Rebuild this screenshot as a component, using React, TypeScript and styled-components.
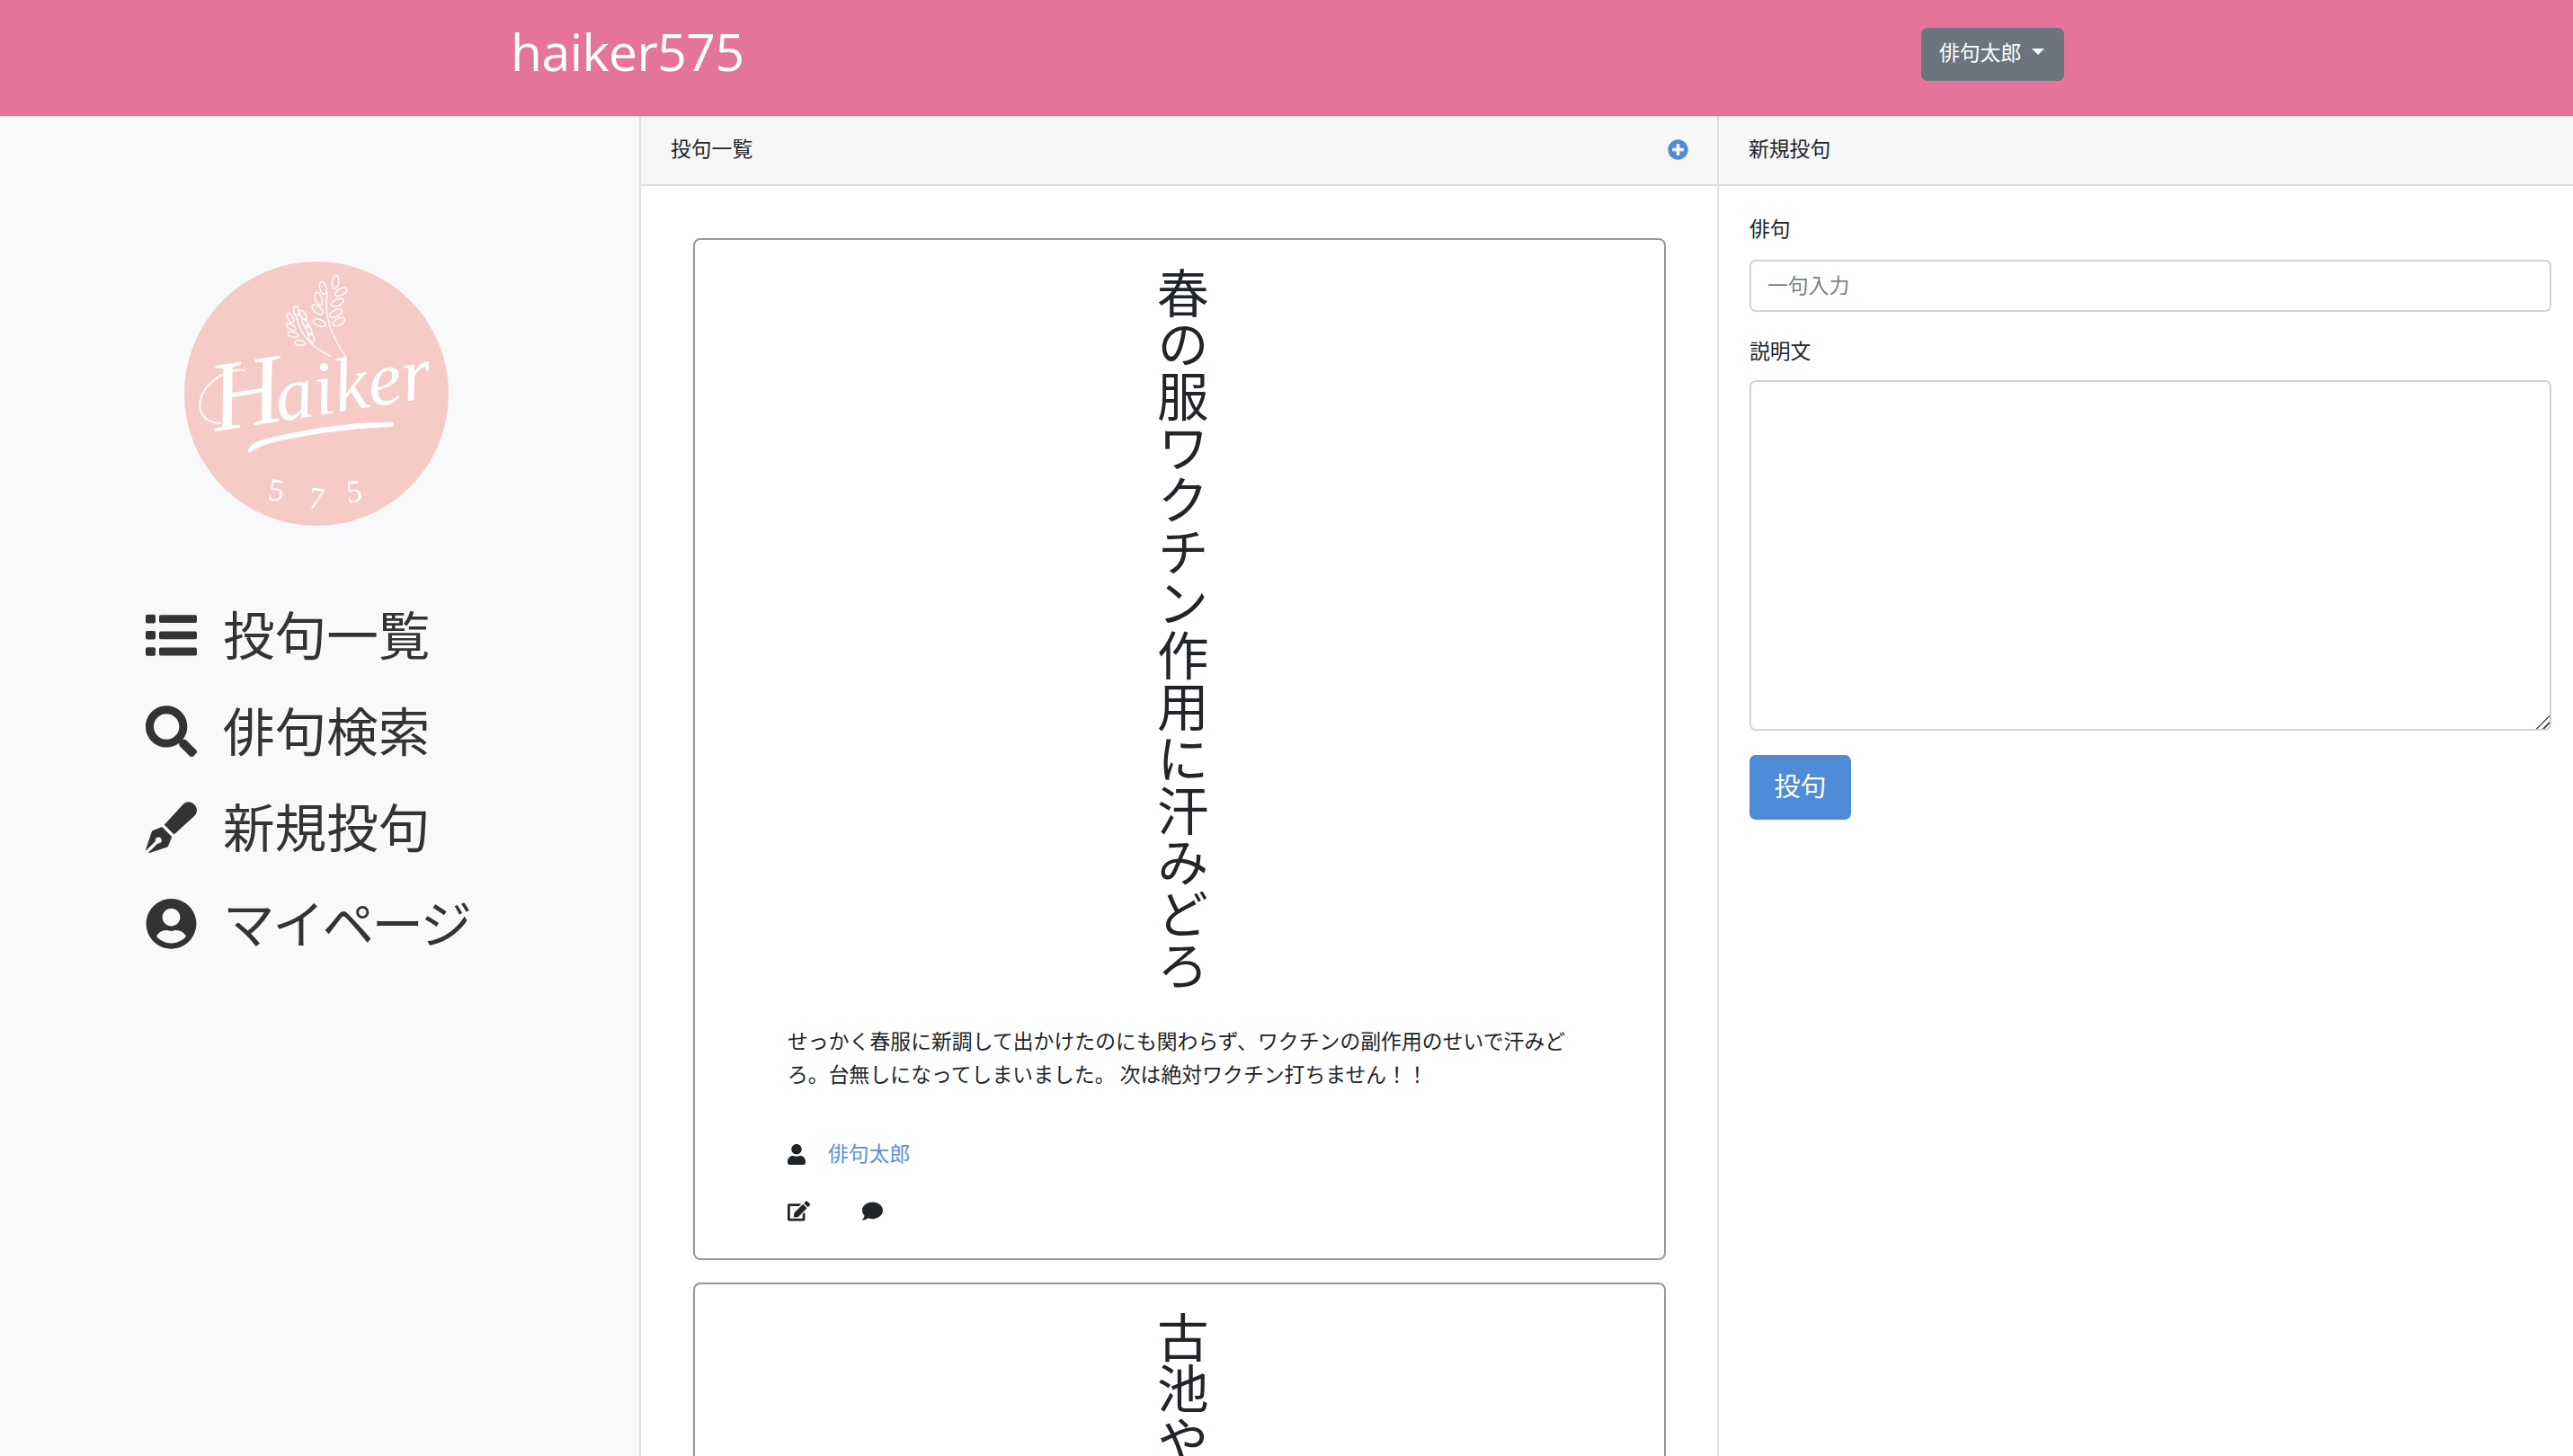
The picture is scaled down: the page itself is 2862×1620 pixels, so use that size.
import styled, { createGlobalStyle } from 'styled-components';
import {
	FaComment,
	FaEdit,
	FaPenFancy,
	FaPlusCircle,
	FaSearch,
	FaUser,
	FaUserCircle,
} from 'react-icons/fa';

const JP = `"Noto Sans CJK JP", "Noto Sans", sans-serif`;

const GlobalStyle = createGlobalStyle`
	* {
		box-sizing: border-box;
	}

	html,
	body {
		margin: 0;
		height: 1620px;
		overflow: hidden;
		background: #fff;
		color: #212529;
		font-family: ${JP};
		font-size: 22.8px;
		line-height: 37px;
	}
`;

function ListIcon() {
	return (
		<svg viewBox="0 -5.8 57 57.6" fill="currentColor">
			{[0, 18.2, 36.4].map((y) => (
				<g key={y}>
					<rect x="0" y={y} width="11" height="9.6" rx="2" />
					<rect x="15" y={y + 0.4} width="42" height="8.8" rx="2" />
				</g>
			))}
		</svg>
	);
}

const NAV_ITEMS = [
	{ icon: <ListIcon />, label: '投句一覧' },
	{ icon: <FaSearch />, label: '俳句検索' },
	{ icon: <FaPenFancy />, label: '新規投句' },
	{ icon: <FaUserCircle />, label: 'マイページ', tight: true },
];

function Logo() {
	const rightLeaves = [
		[578, 130, -80],
		[537, 150, 75],
		[597, 163, -30],
		[522, 186, 70],
		[585, 198, -25],
		[518, 222, 40],
		[580, 234, -25],
		[525, 266, 20],
		[590, 262, -30],
	];
	const leftLeaves = [
		[448, 226, 80],
		[428, 250, 60],
		[470, 240, 60],
		[430, 280, 30],
		[478, 268, 60],
		[437, 305, 15],
		[490, 290, 65],
		[460, 333, 5],
		[498, 315, 70],
	];

	return (
		<svg viewBox="75 62 880 880" width="294" height="294" aria-label="Haiker 575">
			<circle cx="515" cy="502" r="440" fill="#f6cac5" />
			<g fill="none" stroke="#fff" strokeWidth="4.5">
				<path d="M616 385C575 325 535 250 552 165" />
				<path d="M563 378C510 350 465 320 447 245" />
				{rightLeaves.map(([x, y, r]) => (
					<ellipse key={`${x}-${y}`} cx={x} cy={y} rx="22" ry="11" transform={`rotate(${r} ${x} ${y})`} />
				))}
				{leftLeaves.map(([x, y, r]) => (
					<ellipse key={`${x}-${y}`} cx={x} cy={y} rx="17" ry="8" transform={`rotate(${r} ${x} ${y})`} />
				))}
			</g>
			<path
				d="M195 600C120 600 100 520 170 460C205 430 250 418 275 425"
				fill="none"
				stroke="#fff"
				strokeWidth="6"
				strokeLinecap="round"
			/>
			<text
				x="178"
				y="628"
				fill="#fff"
				fontFamily='"Liberation Serif", serif'
				fontStyle="italic"
				transform="rotate(-9 178 628)"
			>
				<tspan fontSize="330">H</tspan>
				<tspan fontSize="255" dx="-24">aiker</tspan>
			</text>
			<path d="M288 692C295 660 340 655 400 640C520 612 660 595 770 597C775 605 770 612 760 613C620 618 480 640 390 660C345 670 310 685 296 698C290 700 287 698 288 692Z" fill="#fff" />
			<g fill="#fff" fontFamily='"Liberation Serif", serif' fontSize="104">
				<text x="355" y="858" transform="rotate(8 385 830)">5</text>
				<text x="490" y="885" transform="rotate(8 515 850)">7</text>
				<text x="615" y="862" transform="rotate(-6 640 830)">5</text>
			</g>
		</svg>
	);
}

const Page = styled.div`
	width: 2862px;
	height: 1620px;
	overflow: hidden;
`;

const Header = styled.header`
	display: flex;
	align-items: flex-start;
	justify-content: space-between;
	height: 129px;
	padding: 29px 566px 0 568px;
	background: #e5749b;
	box-shadow: 0 1px 2px rgba(0, 0, 0, 0.15);
	position: relative;
`;

const Brand = styled.div`
	font-family: "Open Sans", sans-serif;
	font-size: 57px;
	line-height: 57px;
	color: #fff;
	letter-spacing: -0.5px;
`;

const UserButton = styled.button`
	display: flex;
	align-items: center;
	gap: 12px;
	width: 159px;
	height: 59px;
	margin-top: 2px;
	padding: 0 0 7px 20px;
	border: 0;
	border-radius: 7px;
	background: #6c757d;
	color: #fff;
	font-family: ${JP};
	font-size: 22.8px;

	&::after {
		content: '';
		border-top: 7px solid #fff;
		border-left: 7px solid transparent;
		border-right: 7px solid transparent;
	}
`;

const Body = styled.div`
	display: grid;
	grid-template-columns: 711px 1199px 952px;
	height: 1491px;
`;

const Sidebar = styled.aside`
	background: #f8f9fa;
	padding: 162px 0 0 162px;
`;

const LogoWrap = styled.div`
	display: flex;
	height: 294px;
	margin: 0 0 66px 43px;
`;

const NavList = styled.nav`
	display: flex;
	flex-direction: column;
`;

const NavItem = styled.a<{ $tight?: boolean }>`
	display: flex;
	align-items: center;
	gap: 29px;
	height: 107px;
	font-size: 57.6px;
	color: #333;
	letter-spacing: ${({ $tight }) => ($tight ? '-2.4px' : '0')};

	svg {
		flex: none;
		width: 57px;
		height: 57.6px;
		position: relative;
		top: 2px;
	}
`;

const Panel = styled.section`
	border-left: 2px solid #dfdfdf;
	overflow: hidden;
`;

const PanelHeader = styled.div`
	display: flex;
	align-items: center;
	justify-content: space-between;
	height: 78px;
	padding: 0 32px 6px 33px;
	background: #f7f7f7;
	border-bottom: 2px solid #dfdfdf;
	font-size: 22.8px;

	svg {
		width: 23px;
		height: 23px;
		color: #4f8bd6;
		position: relative;
		top: 2px;
	}
`;

const PostList = styled.div`
	display: flex;
	flex-direction: column;
	gap: 25px;
	padding: 58px 57px 0 58px;
`;

const PostCard = styled.article`
	border: 2px solid #999;
	border-radius: 8px;
	padding: 30px 103px 34px;
`;

const Haiku = styled.div`
	writing-mode: vertical-rl;
	font-size: 57.6px;
	line-height: 57.6px;
	height: 807px;
	margin: 0 auto 35px;
	white-space: nowrap;
	color: #212529;
	position: relative;
	left: 3px;
`;

const Description = styled.p`
	margin: 0 0 51px;
	letter-spacing: 0.06px;
`;

const Author = styled.div`
	display: flex;
	align-items: center;
	gap: 25px;
	margin-bottom: 25px;

	svg {
		width: 20px;
		height: 23px;
	}
`;

const AuthorLink = styled.a`
	color: #5a92cf;
	margin-bottom: 3px;
`;

const Actions = styled.div`
	display: flex;
	align-items: center;
	gap: 57px;
	height: 37px;

	svg {
		height: 23px;
		width: 25px;
	}
`;

const PostForm = styled.form`
	display: flex;
	flex-direction: column;
	align-items: flex-start;
	padding: 30px 24px 0 34px;
`;

const Label = styled.label<{ $gap: number }>`
	display: block;
	line-height: 33px;
	margin-bottom: ${({ $gap }) => $gap}px;
`;

const TextInput = styled.input`
	display: block;
	width: 100%;
	height: 58px;
	margin-bottom: 26px;
	padding: 0 18px 4px;
	border: 2px solid #ced4da;
	border-radius: 7px;
	font-family: ${JP};
	font-size: 22.8px;
	background: #fff;

	&::placeholder {
		color: #7a7f85;
		opacity: 1;
	}
`;

const TextArea = styled.textarea`
	display: block;
	width: 100%;
	height: 390px;
	margin-bottom: 27px;
	border: 2px solid #ced4da;
	border-radius: 7px;
	resize: vertical;
	font-family: ${JP};

	&::-webkit-resizer {
		background: linear-gradient(
			135deg,
			transparent 48%,
			#555 48%,
			#555 56%,
			transparent 56%,
			transparent 72%,
			#555 72%,
			#555 80%,
			transparent 80%
		);
	}
`;

const SubmitButton = styled.button`
	width: 113px;
	height: 72px;
	padding: 0 0 6px;
	border: 0;
	border-radius: 7px;
	background: #4f8bd6;
	color: #fff;
	font-family: ${JP};
	font-size: 29px;
`;

export default function App() {
	return (
		<Page>
			<GlobalStyle />
			<Header>
				<Brand>haiker575</Brand>
				<UserButton type="button">俳句太郎</UserButton>
			</Header>
			<Body>
				<Sidebar>
					<LogoWrap>
						<Logo />
					</LogoWrap>
					<NavList>
						{NAV_ITEMS.map((item) => (
							<NavItem key={item.label} $tight={item.tight}>
								{item.icon}
								{item.label}
							</NavItem>
						))}
					</NavList>
				</Sidebar>
				<Panel>
					<PanelHeader>
						投句一覧
						<FaPlusCircle />
					</PanelHeader>
					<PostList>
						<PostCard>
							<Haiku>春の服ワクチン作用に汗みどろ</Haiku>
							<Description>
								せっかく春服に新調して出かけたのにも関わらず、ワクチンの副作用のせいで汗みどろ。台無しになってしまいました。 次は絶対ワクチン打ちません！！
							</Description>
							<Author>
								<FaUser />
								<AuthorLink>俳句太郎</AuthorLink>
							</Author>
							<Actions>
								<FaEdit />
								<FaComment />
							</Actions>
						</PostCard>
						<PostCard>
							<Haiku>古池や蛙飛び込む水の音</Haiku>
						</PostCard>
					</PostList>
				</Panel>
				<Panel>
					<PanelHeader>新規投句</PanelHeader>
					<PostForm>
						<Label $gap={19}>俳句</Label>
						<TextInput placeholder="一句入力" />
						<Label $gap={17}>説明文</Label>
						<TextArea />
						<SubmitButton type="button">投句</SubmitButton>
					</PostForm>
				</Panel>
			</Body>
		</Page>
	);
}
